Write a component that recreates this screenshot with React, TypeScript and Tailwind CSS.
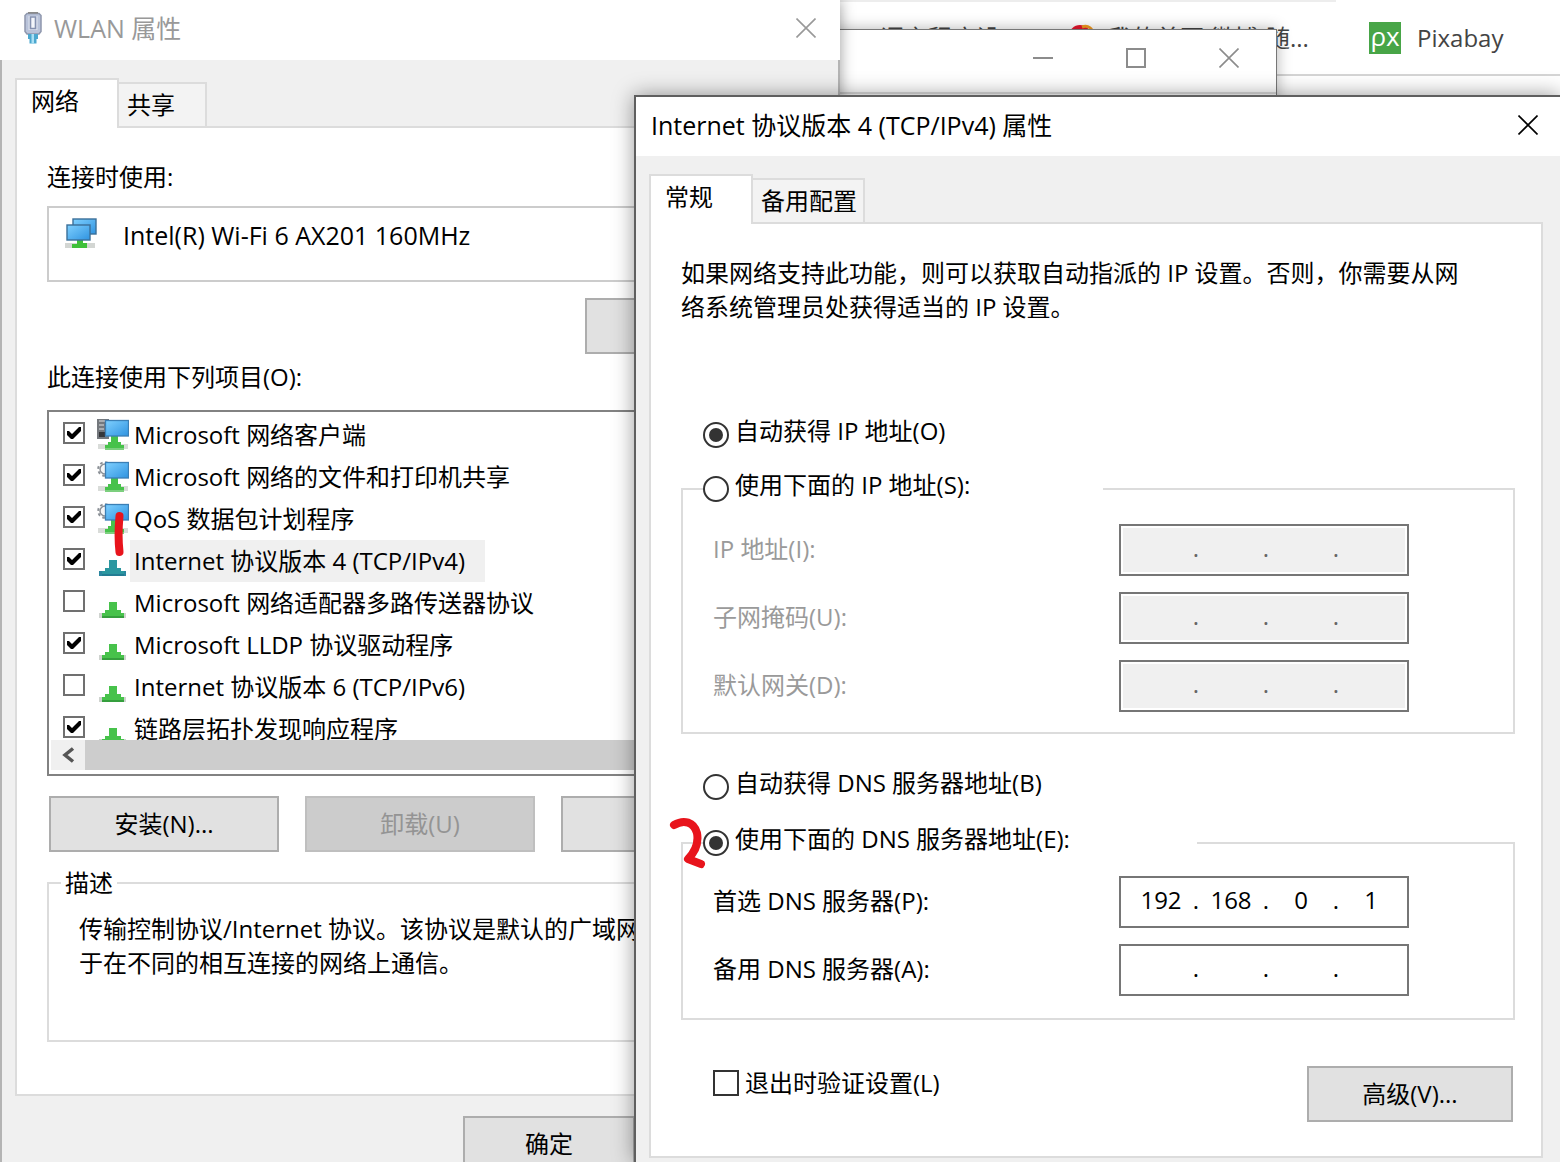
import { useId, type ReactNode } from 'react';

function CloseGlyph() {
  return (
    <svg viewBox="0 0 20 20" className="size-5" fill="none" stroke="currentColor" strokeWidth="1.6" aria-hidden="true">
      <path d="M0.5 0.5 19.5 19.5M19.5 0.5 0.5 19.5" />
    </svg>
  );
}

function CableIcon() {
  return (
    <svg viewBox="0 0 20 34" className="h-[34px] w-5" aria-hidden="true">
      <path d="M4 2.500h12l2 2v16l-2 2.500H4l-2-2.500v-16z" fill="#b9c3da" stroke="#8e97ad" strokeWidth="1.500" />
      <path d="M5 1.800h10" stroke="#8a8a8a" strokeWidth="1.600" />
      <path d="M5.500 5v14h9V5z" fill="#dde2ef" />
      <path d="M7.500 6v11.500h5V6z" fill="#f4f6fb" stroke="#8591b0" strokeWidth="1.600" />
      <path d="M5 23h10v5h-1.500v4.500h-7V28H5z" fill="#4ba7cf" />
      <path d="M8.500 23h2.500v9.500H8.500z" fill="#a9e0f5" />
    </svg>
  );
}

function ScreenGradient({ id }: { id: string }) {
  return (
    <defs>
      <linearGradient id={id} x1="0" y1="0" x2="1" y2="1">
        <stop offset="0" stopColor="#7fd0ff" />
        <stop offset="1" stopColor="#2f93e0" />
      </linearGradient>
    </defs>
  );
}

function AdapterIcon() {
  const id = useId();
  return (
    <svg viewBox="0 0 32 32" className="size-8 shrink-0" aria-hidden="true">
      <ScreenGradient id={id} />
      <rect x="0" y="25" width="30" height="5" fill="#d3d6d3" />
      <path d="M12 21h6v4h4v5H7v-4h5z" fill="#3fc03a" />
      <rect x="8" y="1" width="23" height="15" fill={`url(#${id})`} stroke="#3b6f99" strokeWidth="1.4" />
      <rect x="2" y="7" width="23" height="15" fill={`url(#${id})`} stroke="#3b6f99" strokeWidth="1.4" />
    </svg>
  );
}

type IconKind = 'client' | 'service' | 'selected' | 'protocol';

function ItemIcon({ kind }: { kind: IconKind }) {
  const id = useId();
  if (kind === 'selected' || kind === 'protocol') {
    const teal = kind === 'selected';
    return (
      <svg viewBox="0 0 32 32" className="size-8 shrink-0" aria-hidden="true">
        <rect x="2" y="26" width="27" height="5" fill={teal ? '#2b86a0' : '#cfd3cf'} />
        <path d="M12 15h8v8h4v3h3v5H5v-5h3v-3h4z" fill={teal ? '#2b97a0' : '#47c24b'} />
        <path d="M5 29h22v2H5z" fill={teal ? '#237c93' : '#359f3d'} />
      </svg>
    );
  }
  return (
    <svg viewBox="0 0 32 32" className="size-8 shrink-0" aria-hidden="true">
      <ScreenGradient id={id} />
      <rect x="1" y="25" width="30" height="5" fill="#d9dcd9" />
      <path d="M14 17h7v6h3v3h3v4H8v-4h3v-3h3z" fill="#47c24b" />
      <path d="M8 29h19v2H8z" fill="#7ccf7e" />
      {kind === 'client' ? (
        <g>
          <rect x="0" y="0" width="12" height="20" fill="#74787d" />
          <path d="M2 2h8M2 6h5M2 10h5" stroke="#b9bdc1" strokeWidth="1.600" />
          <rect x="2" y="13" width="6" height="5" fill="#35373a" />
        </g>
      ) : (
        <g fill="none" stroke="#8b9096">
          <circle cx="8" cy="8" r="5" fill="#f4f5f6" strokeWidth="1.500" />
          <circle cx="8" cy="8" r="6.800" strokeWidth="2" strokeDasharray="2.700 2.640" />
        </g>
      )}
      <rect x="8.500" y="1.500" width="23" height="15.500" fill={`url(#${id})`} stroke="#3b7fb5" strokeWidth="1.300" />
    </svg>
  );
}

function Check({ id, checked, large = false }: { id: string; checked: boolean; large?: boolean }) {
  return (
    <span className="relative grid shrink-0">
      <input
        id={id}
        type="checkbox"
        defaultChecked={checked}
        className={
          large
            ? 'peer size-[26px] appearance-none border-2 border-[#333] bg-white'
            : 'peer size-[22px] appearance-none border-2 border-[#707070] bg-white'
        }
      />
      <svg viewBox="0 0 22 22" className="pointer-events-none invisible absolute inset-0 peer-checked:visible" aria-hidden="true">
        <path d="M4 9h2l3 3 7-7h2v4l-8 8H8l-4-4z" fill="#000" />
      </svg>
    </span>
  );
}

function RadioRow({ id, name, checked = false, children }: { id: string; name: string; checked?: boolean; children: ReactNode }) {
  return (
    <div className="flex h-[34px] items-center gap-1.5">
      <input
        id={id}
        type="radio"
        name={name}
        defaultChecked={checked}
        className="grid size-[26px] shrink-0 appearance-none place-content-center rounded-full border-2 border-[#333] bg-white before:size-3.5 before:rounded-full before:content-[''] checked:before:bg-[#333]"
      />
      <label htmlFor={id} className="pb-2 whitespace-nowrap">
        {children}
      </label>
    </div>
  );
}

function AddressRow({ label, octets, disabled = false }: { label: string; octets: string[]; disabled?: boolean }) {
  const id = useId();
  return (
    <div className="flex items-center justify-between">
      <label htmlFor={id} className={disabled ? 'pb-0.5 text-[#9a9a9a]' : 'pb-0.5'}>
        {label}
      </label>
      <div className="h-[52px] w-[290px] shrink-0 border-2 border-[#767676] bg-white p-0.5">
        <div className={disabled ? 'flex h-full items-center bg-[#f0f0f0] pb-1 pl-2 text-[#666]' : 'flex h-full items-center pb-1 pl-2'}>
          {octets.map((octet, i) => (
            <span key={i} className="flex items-center">
              {i > 0 && <span className="w-2.5 text-center">.</span>}
              <input
                id={i === 0 ? id : undefined}
                aria-label={i === 0 ? undefined : `${label} ${i + 1}`}
                defaultValue={octet}
                disabled={disabled}
                className="w-[60px] bg-transparent text-center"
              />
            </span>
          ))}
        </div>
      </div>
    </div>
  );
}

function Tabs({ active, other, otherClass }: { active: string; other: string; otherClass: string }) {
  return (
    <div role="tablist" className="relative z-10 -mb-0.5 flex h-[50px] items-end">
      <button role="tab" aria-selected="true" className="h-[50px] w-[104px] border-2 border-b-0 border-[#dcdcdc] bg-white pb-1.5 pl-3.5 text-left">
        {active}
      </button>
      <button role="tab" aria-selected="false" className={otherClass}>
        {other}
      </button>
    </div>
  );
}

const items: { label: string; icon: IconKind; checked: boolean }[] = [
  { label: 'Microsoft 网络客户端', icon: 'client', checked: true },
  { label: 'Microsoft 网络的文件和打印机共享', icon: 'service', checked: true },
  { label: 'QoS 数据包计划程序', icon: 'service', checked: true },
  { label: 'Internet 协议版本 4 (TCP/IPv4)', icon: 'selected', checked: true },
  { label: 'Microsoft 网络适配器多路传送器协议', icon: 'protocol', checked: false },
  { label: 'Microsoft LLDP 协议驱动程序', icon: 'protocol', checked: true },
  { label: 'Internet 协议版本 6 (TCP/IPv6)', icon: 'protocol', checked: false },
  { label: '链路层拓扑发现响应程序', icon: 'protocol', checked: true },
];

function BookmarkBar() {
  return (
    <nav className="flex h-[76px] flex-col border-b-2 border-[#d5d5d5] text-[#444]">
      <div className="h-0.5 w-[1336px] bg-[#ededed]" />
      <div className="flex h-[74px] items-center pl-[880px]">
        <a href="#course" className="w-[188px] whitespace-nowrap">语言程序设</a>
        <a href="#weibo" className="flex w-[301px] items-center gap-3 whitespace-nowrap">
          <svg viewBox="0 0 28 28" className="size-7" aria-hidden="true">
            <ellipse cx="12" cy="12" rx="11" ry="11" fill="#e6162d" />
            <ellipse cx="13" cy="15" rx="8" ry="9" fill="#fff" />
            <path d="M14 3c6-2 11 1 11 8" fill="none" stroke="#f39a1f" strokeWidth="3" />
          </svg>
          我的首页 微博-随...
        </a>
        <a href="#pixabay" className="flex items-center gap-4">
          <span className="grid size-8 place-content-center bg-[#48a547] pb-1 text-[26px] leading-7 font-medium text-white" aria-hidden="true">ρx</span>
          Pixabay
        </a>
      </div>
    </nav>
  );
}

function BackgroundWindow() {
  return (
    <section className="absolute top-[29px] left-[600px] h-[80px] w-[677px] border border-[#777] bg-white shadow-[0_0_14px_rgba(0,0,0,0.3)]">
      <div className="flex h-14 items-center justify-end gap-[73px] pr-[37px] text-[#8c8c8c]">
        <button aria-label="最小化" className="h-0.5 w-5 bg-[#8c8c8c]" />
        <button aria-label="最大化" className="size-5 border-2 border-[#8c8c8c]" />
        <button aria-label="关闭">
          <CloseGlyph />
        </button>
      </div>
      <div className="mt-1.5 border-t-2 border-[#ddd]" />
    </section>
  );
}

function AdapterWindow() {
  return (
    <section className="absolute inset-y-0 left-0 w-[840px] bg-[#f0f0f0] shadow-[0_0_14px_rgba(0,0,0,0.4)]">
      <header className="flex h-[60px] items-center bg-white pr-6 pb-1 pl-[23px] text-[#999]">
        <CableIcon />
        <h1 className="ml-[11px] grow text-[25px]">WLAN 属性</h1>
        <button aria-label="关闭">
          <CloseGlyph />
        </button>
      </header>
      <div className="border-x-2 border-[#b4b4b4] px-[13px] pt-[18px]">
        <Tabs active="网络" other="共享" otherClass="mb-0.5 h-11 w-[88px] border-2 border-b-0 border-l-0 border-[#dcdcdc] bg-[#f3f3f3] pl-2 text-left" />
        <div className="border-2 border-[#dcdcdc] bg-white px-[30px] pt-8 pb-[52px]">
          <p>连接时使用:</p>
          <div className="mt-3 flex h-[76px] border-2 border-[#ccc] pt-2.5 pl-4">
            <AdapterIcon />
            <span className="ml-[26px] text-[25px]">Intel(R) Wi-Fi 6 AX201 160MHz</span>
          </div>
          <div className="mt-4 flex justify-end">
            <button aria-label="配置" className="h-14 w-[208px] border-2 border-[#adadad] bg-[#e1e1e1]" />
          </div>
          <p className="mt-1.5">此连接使用下列项目(O):</p>
          <div className="mt-4 border-2 border-[#828282] px-0.5 pt-0.5 pb-1">
            <ul className="h-[326px] overflow-hidden">
              {items.map((item, i) => (
                <li key={item.label} className="flex h-[42px] items-center pl-3">
                  <span className="pb-1">
                    <Check id={`item-${i}`} checked={item.checked} />
                  </span>
                  <span className="ml-3">
                    <ItemIcon kind={item.icon} />
                  </span>
                  <label
                    htmlFor={`item-${i}`}
                    className={item.icon === 'selected' ? 'ml-px bg-[#f0f0f0] py-1 pr-5 pl-1 whitespace-nowrap' : 'ml-px py-1 pr-5 pl-1 whitespace-nowrap'}
                  >
                    {item.label}
                  </label>
                </li>
              ))}
            </ul>
            <div className="flex h-[30px]">
              <button aria-label="向左滚动" className="grid w-[34px] place-content-center bg-[#f0f0f0]">
                <svg viewBox="0 0 14 16" className="h-4 w-3.5" fill="none" stroke="#555" strokeWidth="3.500" aria-hidden="true">
                  <path d="M12 1.500 4 8l8 6.500" />
                </svg>
              </button>
              <div className="grow bg-[#cdcdcd]" />
            </div>
          </div>
          <div className="mt-5 flex gap-[26px] pl-0.5">
            <button className="h-14 w-[230px] shrink-0 border-2 border-[#adadad] bg-[#e1e1e1]">安装(N)...</button>
            <button disabled className="h-14 w-[230px] shrink-0 border-2 border-[#bfbfbf] bg-[#ccc] text-[#949494]">卸载(U)</button>
            <button aria-label="属性" className="h-14 w-[230px] shrink-0 border-2 border-[#adadad] bg-[#e1e1e1]" />
          </div>
          <fieldset className="mt-3.5 border-2 border-[#dcdcdc] pt-3 pb-[60px] pl-[30px]">
            <legend className="-ml-[18px] px-1">描述</legend>
            <p>
              传输控制协议/Internet 协议。该协议是默认的广域网
              <br />
              于在不同的相互连接的网络上通信。
            </p>
          </fieldset>
        </div>
        <button className="mt-5 ml-[448px] h-14 w-[172px] border-2 border-[#adadad] bg-[#e1e1e1]">确定</button>
      </div>
      <svg viewBox="0 0 12 46" className="pointer-events-none absolute top-[511px] left-[113px] h-[46px] w-3" aria-hidden="true">
        <path d="M6.500 5C5.500 16 5 28 6.500 41" fill="none" stroke="#e8141c" strokeWidth="8" strokeLinecap="round" />
      </svg>
    </section>
  );
}

function ProtocolWindow() {
  const blank = ['', '', '', ''];
  return (
    <section className="absolute top-[95px] right-0 bottom-0 left-[634px] border-t-2 border-l-2 border-[#5f5f5f] bg-[#f0f0f0] shadow-[0_0_20px_rgba(0,0,0,0.4)]">
      <header className="flex h-[59px] items-center justify-between bg-white pr-[22px] pb-1 pl-[15px]">
        <h2 className="text-[25px]">Internet 协议版本 4 (TCP/IPv4) 属性</h2>
        <button aria-label="关闭">
          <CloseGlyph />
        </button>
      </header>
      <div className="pt-[18px] pr-[17px] pl-[13px]">
        <Tabs active="常规" other="备用配置" otherClass="mb-0.5 h-11 w-28 border-2 border-b-0 border-l-0 border-[#dcdcdc] bg-[#f3f3f3] pl-2 text-left whitespace-nowrap" />
        <div className="border-2 border-[#dcdcdc] bg-white pt-8 pr-[26px] pb-[34px] pl-[30px]">
          <p>
            如果网络支持此功能，则可以获取自动指派的 IP 设置。否则，你需要从网
            <br />
            络系统管理员处获得适当的 IP 设置。
          </p>
          <div className="mt-[94px] pl-[22px]">
            <RadioRow id="ip-auto" name="ip" checked>自动获得 IP 地址(O)</RadioRow>
          </div>
          <fieldset className="mt-5 border-2 border-[#dcdcdc] pt-[18px] pr-[104px] pb-5 pl-[30px]">
            <legend className="-ml-2.5 w-[400px]">
              <RadioRow id="ip-manual" name="ip">使用下面的 IP 地址(S):</RadioRow>
            </legend>
            <div className="flex flex-col gap-4">
              <AddressRow label="IP 地址(I):" octets={blank} disabled />
              <AddressRow label="子网掩码(U):" octets={blank} disabled />
              <AddressRow label="默认网关(D):" octets={blank} disabled />
            </div>
          </fieldset>
          <div className="mt-9 pl-[22px]">
            <RadioRow id="dns-auto" name="dns">自动获得 DNS 服务器地址(B)</RadioRow>
          </div>
          <fieldset className="mt-[22px] border-2 border-[#dcdcdc] pt-4 pr-[104px] pb-[22px] pl-[30px]">
            <legend className="-ml-2.5 w-[494px]">
              <RadioRow id="dns-manual" name="dns" checked>使用下面的 DNS 服务器地址(E):</RadioRow>
            </legend>
            <div className="flex flex-col gap-4">
              <AddressRow label="首选 DNS 服务器(P):" octets={['192', '168', '0', '1']} />
              <AddressRow label="备用 DNS 服务器(A):" octets={blank} />
            </div>
          </fieldset>
          <div className="mt-[46px] flex items-start justify-between pr-0.5 pl-8">
            <div className="flex items-center gap-1.5">
              <Check id="validate" checked={false} large />
              <label htmlFor="validate">退出时验证设置(L)</label>
            </div>
            <button className="h-14 w-[206px] border-2 border-[#adadad] bg-[#e1e1e1]">高级(V)...</button>
          </div>
        </div>
      </div>
      <svg viewBox="0 0 40 56" className="pointer-events-none absolute top-[718px] left-[30px] h-14 w-10" aria-hidden="true">
        <path d="M8 10C18 4 28 7 31 18c2 11-3 20-9 26l13 5" fill="none" stroke="#e8141c" strokeWidth="8" strokeLinecap="round" strokeLinejoin="round" />
      </svg>
    </section>
  );
}

export default function App() {
  return (
    <main lang="zh-CN" className="relative h-screen overflow-hidden bg-white font-['Open_Sans','Noto_Sans_CJK_SC',sans-serif] text-2xl leading-[34px] text-black">
      <BookmarkBar />
      <BackgroundWindow />
      <AdapterWindow />
      <ProtocolWindow />
    </main>
  );
}
